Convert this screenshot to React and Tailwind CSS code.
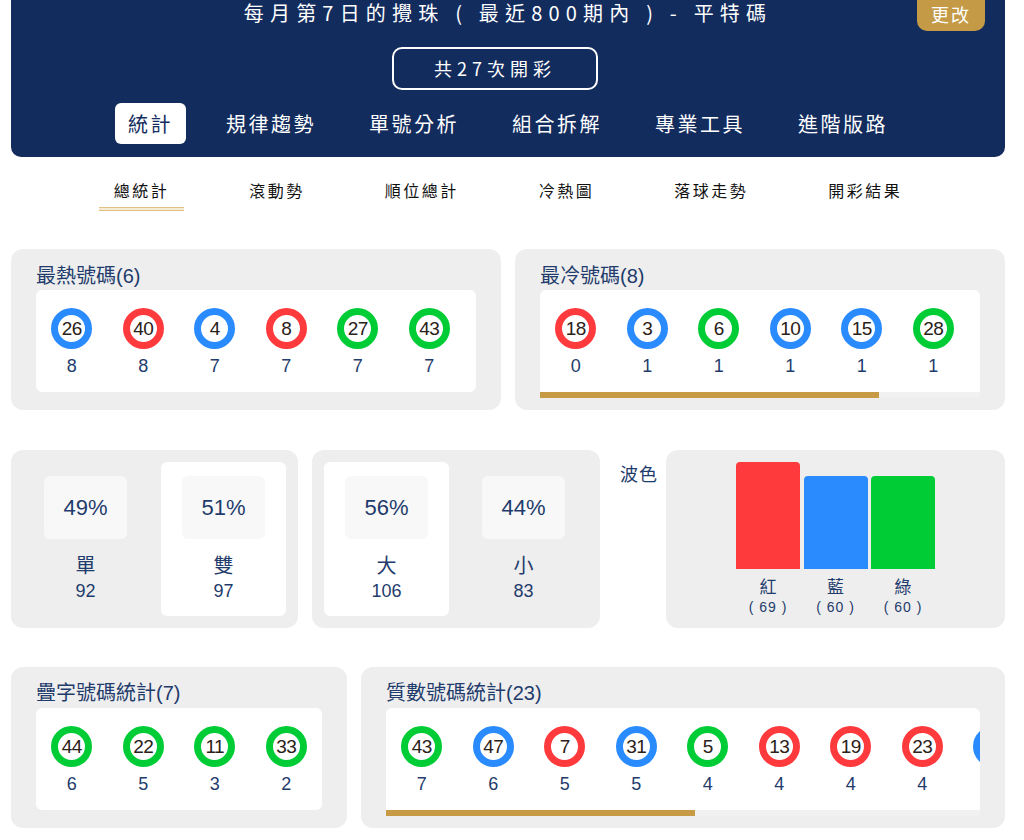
import React from 'react';

const COLORS = {
  red: 'border-[#ff3a3d]',
  blue: 'border-[#2a8bff]',
  green: 'border-[#00cc36]',
};

const redSet = [1, 2, 7, 8, 12, 13, 18, 19, 23, 24, 29, 30, 34, 35, 40, 45, 46];
const blueSet = [3, 4, 9, 10, 14, 15, 20, 25, 26, 31, 36, 37, 41, 42, 47, 48];

function colorOf(n) {
  if (redSet.includes(n)) return 'red';
  if (blueSet.includes(n)) return 'blue';
  return 'green';
}

const hot = [[26, 8], [40, 8], [4, 7], [8, 7], [27, 7], [43, 7]];
const cold = [[18, 0], [3, 1], [6, 1], [10, 1], [15, 1], [28, 1], [30, 1], [35, 1]];
const doubles = [[44, 6], [22, 5], [11, 3], [33, 2]];
const primes = [
  [43, 7], [47, 6], [7, 5], [31, 5], [5, 4], [13, 4], [19, 4], [23, 4],
  [3, 3], [37, 3], [41, 3], [11, 2], [17, 2], [29, 2], [2, 1], [47, 1],
];

const tabs = ['統計', '規律趨勢', '單號分析', '組合拆解', '專業工具', '進階版路'];
const subTabs = ['總統計', '滾動勢', '順位總計', '冷熱圖', '落球走勢', '開彩結果'];

function Ball({ n, count }) {
  return (
    <div className="w-[71.5px] shrink-0 flex flex-col items-center">
      <div
        className={`w-[41px] h-[41px] rounded-full border-[7px] ${COLORS[colorOf(n)]} bg-white flex items-center justify-center text-[19px] leading-none tracking-[-0.5px] text-[#2a2118]`}
      >
        {n}
      </div>
      <div className="mt-[6px] h-[22px] leading-[22px] text-[18px] text-[#1f3c6c]">{count}</div>
    </div>
  );
}

function BallCard({ title, items, className, scroll, thumb, innerTop = 'mt-[2px]', pt = 'pt-[15px]' }) {
  return (
    <div className={`min-w-0 h-[161px] rounded-[12px] bg-[#eeeeee] px-[25px] ${pt} ${className}`}>
      <div className="h-[24px] leading-[24px] text-[20px] text-[#1f3c6c]">{title}</div>
      <div className={`${innerTop} bg-white rounded-t-[6px] ${scroll ? '' : 'rounded-b-[6px]'} overflow-hidden`}>
        <div className="h-[102px] pt-[18px] flex overflow-hidden">
          {items.map(([n, c], i) => (
            <Ball key={i} n={n} count={c} />
          ))}
        </div>
        {scroll && (
          <div className="h-[6px] bg-[#f1f1f1] flex">
            <div className={`h-full bg-[#c79b45] ${thumb}`} />
          </div>
        )}
      </div>
    </div>
  );
}

function StatCell({ pct, label, num, active }) {
  return (
    <div className={`w-[125px] rounded-[6px] pt-[14px] flex flex-col items-center ${active ? 'bg-white' : ''}`}>
      <div className="w-[83px] h-[63px] rounded-[6px] bg-[#f8f8f8] flex items-center justify-center text-[22px] text-[#1f3c6c]">
        {pct}
      </div>
      <div className="mt-[15px] h-[24px] leading-[24px] text-[20px] text-[#1f3c6c]">{label}</div>
      <div className="mt-[2px] h-[22px] leading-[22px] text-[18px] text-[#1f3c6c]">{num}</div>
    </div>
  );
}

const bars = [
  { label: '紅', value: 69, cls: 'bg-[#ff3a3d] h-[107px]' },
  { label: '藍', value: 60, cls: 'bg-[#2a8bff] h-[93px]' },
  { label: '綠', value: 60, cls: 'bg-[#00cc36] h-[93px]' },
];

export default function App() {
  return (
    <div className="w-[1016px] px-[11px] pb-[12px] bg-white font-['Liberation_Sans','Noto_Sans_CJK_TC',sans-serif]">
      {/* Header */}
      <div className="relative h-[157px] bg-[#132c5e] rounded-b-[10px] flex flex-col items-center font-['Noto_Sans_CJK_TC',sans-serif] text-white">
        <div className="h-[28px] leading-[28px] text-[20px] tracking-[6.2px] -mt-[1px]">
          每月第7日的攪珠 ( 最近800期內 ) - 平特碼
        </div>
        <div className="absolute right-[20px] -top-[10px] w-[68px] h-[41px] pt-[8px] rounded-[10px] bg-[#c49a46] flex items-center justify-center text-[18px] tracking-[2px]">
          更改
        </div>
        <div className="mt-[20px] -ml-[26px] w-[206px] h-[43px] rounded-[10px] border-2 border-white flex items-center justify-center text-[18px] tracking-[5px]">
          共27次開彩
        </div>
        <div className="mt-[13px] flex gap-[27px]">
          {tabs.map((t, i) => (
            <div
              key={t}
              className={`h-[41px] px-[13px] rounded-[6px] flex items-center text-[20px] tracking-[2.5px] ${i === 0 ? 'bg-white text-[#132c5e]' : 'text-white'}`}
            >
              {t}
            </div>
          ))}
        </div>
      </div>

      {/* Sub tabs */}
      <div className="mt-[21px] flex justify-center gap-[50px] font-['Noto_Sans_CJK_TC',sans-serif]">
        {subTabs.map((t, i) => (
          <div key={t} className="flex flex-col items-center">
            <div className="px-[15px] h-[24px] leading-[24px] text-[16px] tracking-[2.5px] text-[#111111]">{t}</div>
            <div className={`mt-[5px] w-full h-[4px] ${i === 0 ? 'border-y border-[#e2c283] bg-[#f6ecd6]' : ''}`} />
          </div>
        ))}
      </div>

      {/* Row 1 */}
      <div className="mt-[38px] flex gap-[14px]">
        <BallCard title="最熱號碼(6)" items={hot} className="w-[490px] shrink-0" />
        <BallCard title="最冷號碼(8)" items={cold} className="flex-1" scroll thumb="w-[339px]" />
      </div>

      {/* Row 2 */}
      <div className="mt-[40px] flex">
        <div className="w-[287px] h-[178px] rounded-[12px] bg-[#eeeeee] p-[12px] flex gap-[13px]">
          <StatCell pct="49%" label="單" num="92" />
          <StatCell pct="51%" label="雙" num="97" active />
        </div>
        <div className="ml-[14px] w-[288px] h-[178px] rounded-[12px] bg-[#eeeeee] p-[12px] flex gap-[12px]">
          <StatCell pct="56%" label="大" num="106" active />
          <StatCell pct="44%" label="小" num="83" />
        </div>
        <div className="ml-[20px] pt-[13px] h-[24px] leading-[24px] text-[18px] tracking-[1px] text-[#1f3c6c]">波色</div>
        <div className="ml-[8px] min-w-0 flex-1 h-[178px] rounded-[12px] bg-[#eeeeee] pt-[12px] flex justify-center gap-[3.5px]">
          {bars.map((b) => (
            <div key={b.label} className="w-[64px] flex flex-col items-center">
              <div className="h-[107px] w-full flex items-end">
                <div className={`w-full rounded-t-[4px] ${b.cls}`} />
              </div>
              <div className="mt-[8px] h-[22px] leading-[22px] text-[17px] text-[#1f3c6c]">{b.label}</div>
              <div className="h-[16px] leading-[16px] text-[14px] tracking-[1px] text-[#1f3c6c] whitespace-pre">( {b.value} )</div>
            </div>
          ))}
        </div>
      </div>

      {/* Row 3 */}
      <div className="mt-[39px] flex gap-[14px]">
        <BallCard title="疊字號碼統計(7)" items={doubles} className="w-[336px] shrink-0" pt="pt-[14px]" innerTop="mt-[3px]" />
        <BallCard title="質數號碼統計(23)" items={primes} className="flex-1" pt="pt-[14px]" innerTop="mt-[3px]" scroll thumb="w-[309px]" />
      </div>
    </div>
  );
}
